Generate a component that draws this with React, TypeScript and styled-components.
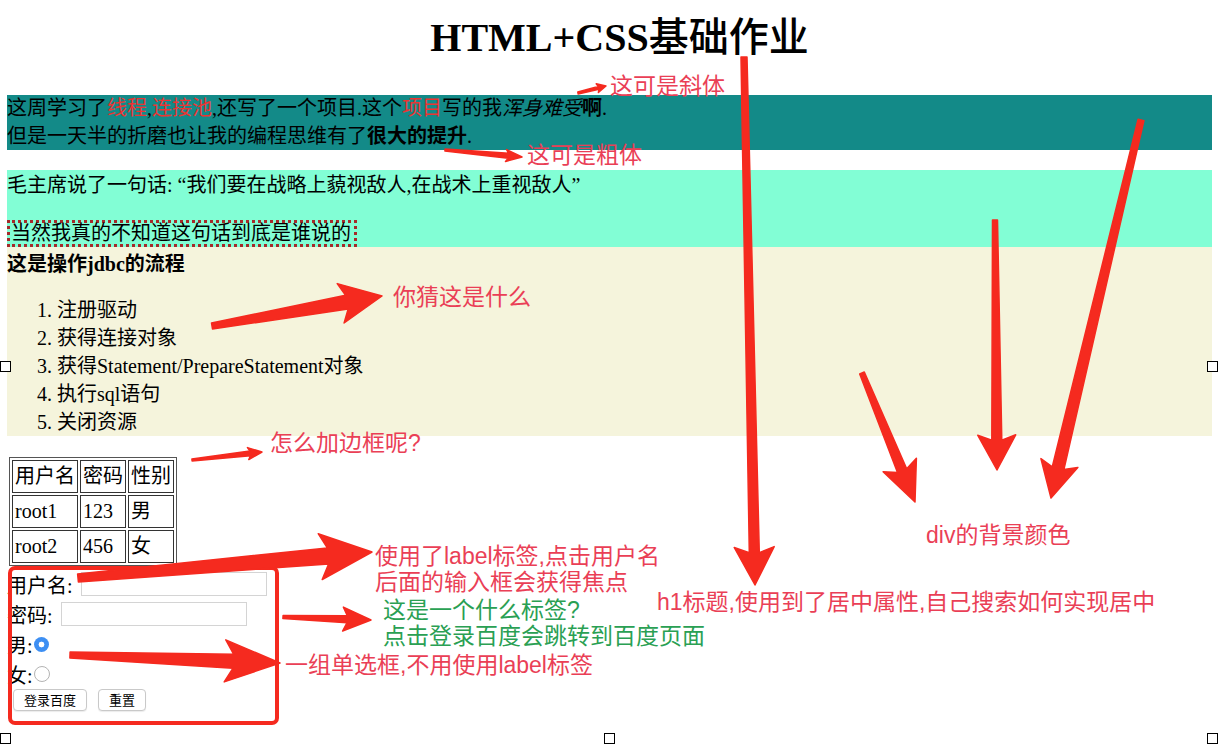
import React from "react";
import styled, { createGlobalStyle } from "styled-components";

const GlobalStyle = createGlobalStyle`
  html, body { margin: 0; padding: 0; background: #fff; }
  body { font-family: "Liberation Serif", "Noto Sans CJK SC", serif; color: #000; }
`;

const SERIF = `"Liberation Serif", "Noto Sans CJK SC", serif`;
const SANS = `"Noto Sans", "Noto Sans CJK SC", sans-serif`;
const NOTE_FONT = `"Liberation Sans", "Noto Sans CJK SC", sans-serif`;
const ARROW = "#f52a1f";
const NOTE_RED = "#ea3f56";
const NOTE_GREEN = "#2aa053";

const Page = styled.div`
  position: relative;
  width: 1218px;
  height: 744px;
  overflow: hidden;
  padding: 0 6px 0 7px;
  box-sizing: border-box;
  font-family: ${SERIF};
  font-size: 20px;
`;

const Title = styled.h1`
  margin: 15px 0 34px;
  padding-left: 20px;
  text-align: center;
  font: bold 40px/46px ${SERIF};
`;

const TitleCjk = styled.span`
  font-weight: 500;
`;

const TealBox = styled.div`
  background: #138a88;
  line-height: 27.5px;
`;

const RedWord = styled.span`
  color: #ec3432;
`;

const Ital = styled.em`
  font-style: italic;
`;

const Strong = styled.strong`
  font-weight: bold;
`;

const AquaBox = styled.div`
  margin-top: 20px;
  background: #82fed5;
`;

const Para = styled.p`
  margin: 0 0 20px;
  line-height: 30px;
`;

const QuoteRow = styled.div`
  display: flex;
`;

const Quote = styled.span`
  border: 3px dotted #a52a2a;
  line-height: 21px;
  padding: 0 3px 0 1px;
`;

const BeigeBox = styled.div`
  background: #f5f4dc;
`;

const JdbcTitle = styled.div`
  font-weight: bold;
  line-height: 34px;
`;

const Steps = styled.ol`
  margin: 15px 0 0;
  padding-left: 50px;
  li {
    line-height: 28px;
  }
`;

const UserTable = styled.table`
  margin: 21px 0 0 2px;
  border-collapse: separate;
  border-spacing: 2px;
  border: 1px solid #555;
  font-size: 20px;
  td {
    border: 1px solid #333;
    padding: 2px;
    line-height: 27px;
    text-align: left;
  }
`;

const Form = styled.form`
  padding-top: 3px;
  margin: 0;
`;

const FormRow = styled.div<{ $gap?: number }>`
  height: 30px;
  display: flex;
  align-items: center;
  gap: ${(p) => p.$gap ?? 0}px;
`;

const TextInput = styled.input`
  width: 186px;
  height: 24px;
  box-sizing: border-box;
  border: 1px solid #d4d4d4;
  background: #fff;
  padding: 0 4px;
  outline: none;
`;

const Radio = styled.input`
  appearance: none;
  margin: 0 0 0 1px;
  width: 16px;
  height: 16px;
  border-radius: 50%;
  border: 1px solid #b3b3b3;
  background: #fff;
  box-sizing: border-box;
  &:checked {
    border: none;
    width: 15px;
    height: 15px;
    background: radial-gradient(circle, #fff 0 2.6px, #3d8ff3 3.2px);
  }
`;

const ButtonRow = styled.div`
  display: flex;
  gap: 11px;
  padding-left: 6px;
`;

const Btn = styled.button`
  height: 22px;
  padding: 0 10px;
  font: 13px/20px ${SANS};
  color: #000;
  background: #fff;
  border: 1px solid #c9c9c9;
  border-radius: 4px;
  box-shadow: 0 1px 1px rgba(0, 0, 0, 0.08);
`;

/* ---------- annotation layer (drawn over the page) ---------- */

const Overlay = styled.div`
  position: absolute;
  inset: 0;
  pointer-events: none;
`;

const ArrowLayer = styled.svg`
  position: absolute;
  inset: 0;
`;

const Note = styled.div<{ $x: number; $y: number; $color: string; $lh: number }>`
  position: absolute;
  left: ${(p) => p.$x}px;
  top: ${(p) => p.$y}px;
  color: ${(p) => p.$color};
  font: 23px/${(p) => p.$lh}px ${NOTE_FONT};
  white-space: nowrap;
`;

const Frame = styled.div`
  position: absolute;
  left: 8px;
  top: 566px;
  width: 271px;
  height: 159px;
  box-sizing: border-box;
  border: 4px solid ${ARROW};
  border-radius: 7px;
`;

const Handle = styled.div<{ $x: number; $y: number }>`
  position: absolute;
  left: ${(p) => p.$x}px;
  top: ${(p) => p.$y}px;
  width: 11px;
  height: 11px;
  box-sizing: border-box;
  border: 1px solid #000;
  background: #fff;
`;

type ArrowSpec = {
  x1: number; y1: number; x2: number; y2: number;
  w1: number; w2: number; hl: number; hw: number;
};

const arrows: ArrowSpec[] = [
  { x1: 578, y1: 93, x2: 606, y2: 86, w1: 2, w2: 3, hl: 9, hw: 9 },
  { x1: 445, y1: 150, x2: 522, y2: 157, w1: 2, w2: 5, hl: 16, hw: 12 },
  { x1: 212, y1: 326, x2: 382, y2: 296, w1: 6, w2: 14, hl: 42, hw: 40 },
  { x1: 192, y1: 460, x2: 262, y2: 452, w1: 2, w2: 5, hl: 14, hw: 12 },
  { x1: 78, y1: 578, x2: 372, y2: 552, w1: 8, w2: 16, hl: 52, hw: 46 },
  { x1: 283, y1: 617, x2: 371, y2: 620, w1: 3, w2: 7, hl: 28, hw: 24 },
  { x1: 70, y1: 655, x2: 280, y2: 663, w1: 6, w2: 14, hl: 55, hw: 42 },
  { x1: 744, y1: 57, x2: 755, y2: 585, w1: 6, w2: 10, hl: 38, hw: 40 },
  { x1: 862, y1: 373, x2: 915, y2: 502, w1: 5, w2: 10, hl: 40, hw: 36 },
  { x1: 995, y1: 220, x2: 997, y2: 470, w1: 5, w2: 10, hl: 35, hw: 38 },
  { x1: 1141, y1: 120, x2: 1051, y2: 498, w1: 6, w2: 12, hl: 36, hw: 38 },
];

function arrowPoints(a: ArrowSpec): string {
  const dx = a.x2 - a.x1;
  const dy = a.y2 - a.y1;
  const len = Math.hypot(dx, dy);
  const ux = dx / len;
  const uy = dy / len;
  const nx = -uy;
  const ny = ux;
  const bx = a.x2 - ux * a.hl;
  const by = a.y2 - uy * a.hl;
  const bx2 = a.x2 - ux * a.hl * 0.85;
  const by2 = a.y2 - uy * a.hl * 0.85;
  const pts: [number, number][] = [
    [a.x1 + (nx * a.w1) / 2, a.y1 + (ny * a.w1) / 2],
    [bx2 + (nx * a.w2) / 2, by2 + (ny * a.w2) / 2],
    [bx + (nx * a.hw) / 2, by + (ny * a.hw) / 2],
    [a.x2, a.y2],
    [bx - (nx * a.hw) / 2, by - (ny * a.hw) / 2],
    [bx2 - (nx * a.w2) / 2, by2 - (ny * a.w2) / 2],
    [a.x1 - (nx * a.w1) / 2, a.y1 - (ny * a.w1) / 2],
  ];
  return pts.map(([x, y]) => `${x.toFixed(1)},${y.toFixed(1)}`).join(" ");
}

const steps = [
  "注册驱动",
  "获得连接对象",
  "获得Statement/PrepareStatement对象",
  "执行sql语句",
  "关闭资源",
];

const rows = [
  ["用户名", "密码", "性别"],
  ["root1", "123", "男"],
  ["root2", "456", "女"],
];

export default function App() {
  return (
    <>
      <GlobalStyle />
      <Page>
        <Title>
          HTML+CSS<TitleCjk>基础作业</TitleCjk>
        </Title>

        <TealBox>
          这周学习了<RedWord>线程</RedWord>,<RedWord>连接池</RedWord>,还写了一个项目.这个
          <RedWord>项目</RedWord>写的我<Ital>浑身难受</Ital><Strong>啊</Strong>.
          <br />
          但是一天半的折磨也让我的编程思维有了<Strong>很大的提升</Strong>.
        </TealBox>

        <AquaBox>
          <Para>毛主席说了一句话: “我们要在战略上藐视敌人,在战术上重视敌人”</Para>
          <QuoteRow>
            <Quote>当然我真的不知道这句话到底是谁说的</Quote>
          </QuoteRow>
        </AquaBox>

        <BeigeBox>
          <JdbcTitle>这是操作jdbc的流程</JdbcTitle>
          <Steps>
            {steps.map((s) => (
              <li key={s}>{s}</li>
            ))}
          </Steps>
        </BeigeBox>

        <UserTable>
          <tbody>
            {rows.map((r) => (
              <tr key={r[0]}>
                {r.map((c) => (
                  <td key={c}>{c}</td>
                ))}
              </tr>
            ))}
          </tbody>
        </UserTable>

        <Form action="https://www.baidu.com" onSubmit={(e) => e.preventDefault()}>
          <FormRow $gap={8}>
            <label htmlFor="username">用户名:</label>
            <TextInput id="username" type="text" />
          </FormRow>
          <FormRow $gap={8}>
            <span>密码:</span>
            <TextInput type="password" />
          </FormRow>
          <FormRow>
            男:<Radio type="radio" name="sex" defaultChecked />
          </FormRow>
          <FormRow>
            女:<Radio type="radio" name="sex" />
          </FormRow>
          <ButtonRow>
            <Btn type="submit">登录百度</Btn>
            <Btn type="reset">重置</Btn>
          </ButtonRow>
        </Form>

        <Overlay>
          <Frame />
          <ArrowLayer width="1218" height="744" viewBox="0 0 1218 744">
            {arrows.map((a, i) => (
              <polygon
                key={i}
                points={arrowPoints(a)}
                fill={ARROW}
                stroke={ARROW}
                strokeWidth={1.5}
                strokeLinejoin="round"
              />
            ))}
          </ArrowLayer>
          <Note $x={610} $y={74} $color={NOTE_RED} $lh={24}>这可是斜体</Note>
          <Note $x={527} $y={143} $color={NOTE_RED} $lh={24}>这可是粗体</Note>
          <Note $x={393} $y={285} $color={NOTE_RED} $lh={24}>你猜这是什么</Note>
          <Note $x={270} $y={431} $color={NOTE_RED} $lh={24}>怎么加边框呢?</Note>
          <Note $x={375} $y={543} $color={NOTE_RED} $lh={26}>
            使用了label标签,点击用户名
            <br />
            后面的输入框会获得焦点
          </Note>
          <Note $x={383} $y={597} $color={NOTE_GREEN} $lh={26}>
            这是一个什么标签?
            <br />
            点击登录百度会跳转到百度页面
          </Note>
          <Note $x={285} $y={653} $color={NOTE_RED} $lh={24}>一组单选框,不用使用label标签</Note>
          <Note $x={657} $y={590} $color={NOTE_RED} $lh={24}>
            h1标题,使用到了居中属性,自己搜索如何实现居中
          </Note>
          <Note $x={926} $y={523} $color={NOTE_RED} $lh={24}>div的背景颜色</Note>
          <Handle $x={0} $y={361} />
          <Handle $x={1207} $y={361} />
          <Handle $x={0} $y={733} />
          <Handle $x={604} $y={733} />
          <Handle $x={1207} $y={733} />
        </Overlay>
      </Page>
    </>
  );
}
